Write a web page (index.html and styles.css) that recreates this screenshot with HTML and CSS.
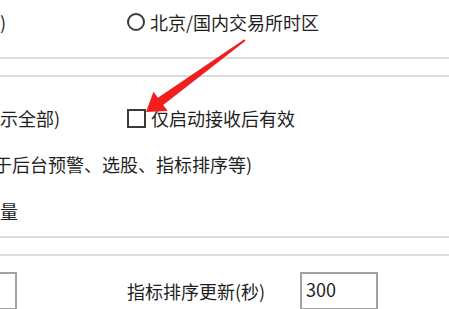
FILE: index.html
```html
<!DOCTYPE html>
<html lang="zh-CN">
<head>
<meta charset="utf-8">
<title>设置</title>
<link rel="stylesheet" href="styles.css">
</head>
<body>
<div class="page">
  <section class="group g1">
    <div class="row">
      <span class="left">本地时区(电脑)</span>
      <label class="opt"><span class="radio"></span><span>北京/国内交易所时区</span></label>
    </div>
  </section>
  <section class="group g2">
    <div class="row r2">
      <span class="left">数据个数(空表示全部)</span>
      <label class="opt"><span class="check"></span><span>仅启动接收后有效</span></label>
    </div>
    <div class="row r3">
      <span class="text shift12">后台数据(用于后台预警、选股、指标排序等)</span>
    </div>
    <div class="row r4">
      <span class="text shift6">自动下载成交量</span>
    </div>
  </section>
  <section class="group g3">
    <div class="row r6">
      <span class="left"><span class="input short"></span></span>
      <span class="label">指标排序更新(秒)</span>
      <span class="input value">300</span>
    </div>
  </section>
</div>
<svg class="arrow" width="449" height="309" viewBox="0 0 449 309" aria-hidden="true">
  <polygon points="146,112 153.5,91.7 157.9,97.8 244.4,39.2 245.6,40.8 163.2,105 167.7,111.1" fill="#f01e1e"/>
</svg>
</body>
</html>
```
FILE: styles.css
```css
html, body {
  margin: 0;
  padding: 0;
  background: #ffffff;
  overflow: hidden;
}
body {
  width: 449px;
  height: 309px;
  position: relative;
  font-family: "Noto Sans CJK SC", "Noto Sans", sans-serif;
  font-size: 18px;
  color: #1f1f1f;
}
.page {
  margin-left: -114px;
  width: 620px;
}
.group {
  border-color: #dcdcdc;
  border-style: solid;
  border-width: 0;
}
.g1 {
  padding: 10px 0 23px;
  border-bottom-width: 2px;
}
.g2 {
  margin-top: 16px;
  padding: 29px 0 13px;
  border-top-width: 2px;
  border-bottom-width: 2px;
}
.g3 {
  margin-top: 16px;
  padding-top: 16px;
  border-top-width: 2px;
}
.row {
  display: flex;
  align-items: center;
  height: 24px;
  line-height: 24px;
  white-space: nowrap;
}
.r3 { margin-top: 22px; }
.r4 { margin-top: 23px; }
.left {
  flex: none;
  width: 241px;
  display: flex;
  align-items: center;
}
.opt {
  display: flex;
  align-items: center;
  gap: 5px;
}
.radio {
  width: 18px;
  height: 18px;
  box-sizing: border-box;
  border: 2px solid #3a3a3a;
  border-radius: 50%;
}
.check {
  width: 19px;
  height: 19px;
  box-sizing: border-box;
  border: 2px solid #3a3a3a;
}
.shift12 { padding-left: 12px; }
.shift6 { padding-left: 6px; }
.r6 {
  height: 38px;
}
.input {
  box-sizing: border-box;
  height: 38px;
  border: 2px solid #a2a2a2;
  background: #fff;
}
.short {
  width: 80px;
  margin-left: 51px;
}
.label {
  flex: none;
  width: 173px;
}
.value {
  width: 78px;
  padding: 0 4px;
  line-height: 30px;
}
.arrow {
  position: absolute;
  left: 0;
  top: 0;
  pointer-events: none;
}
```
